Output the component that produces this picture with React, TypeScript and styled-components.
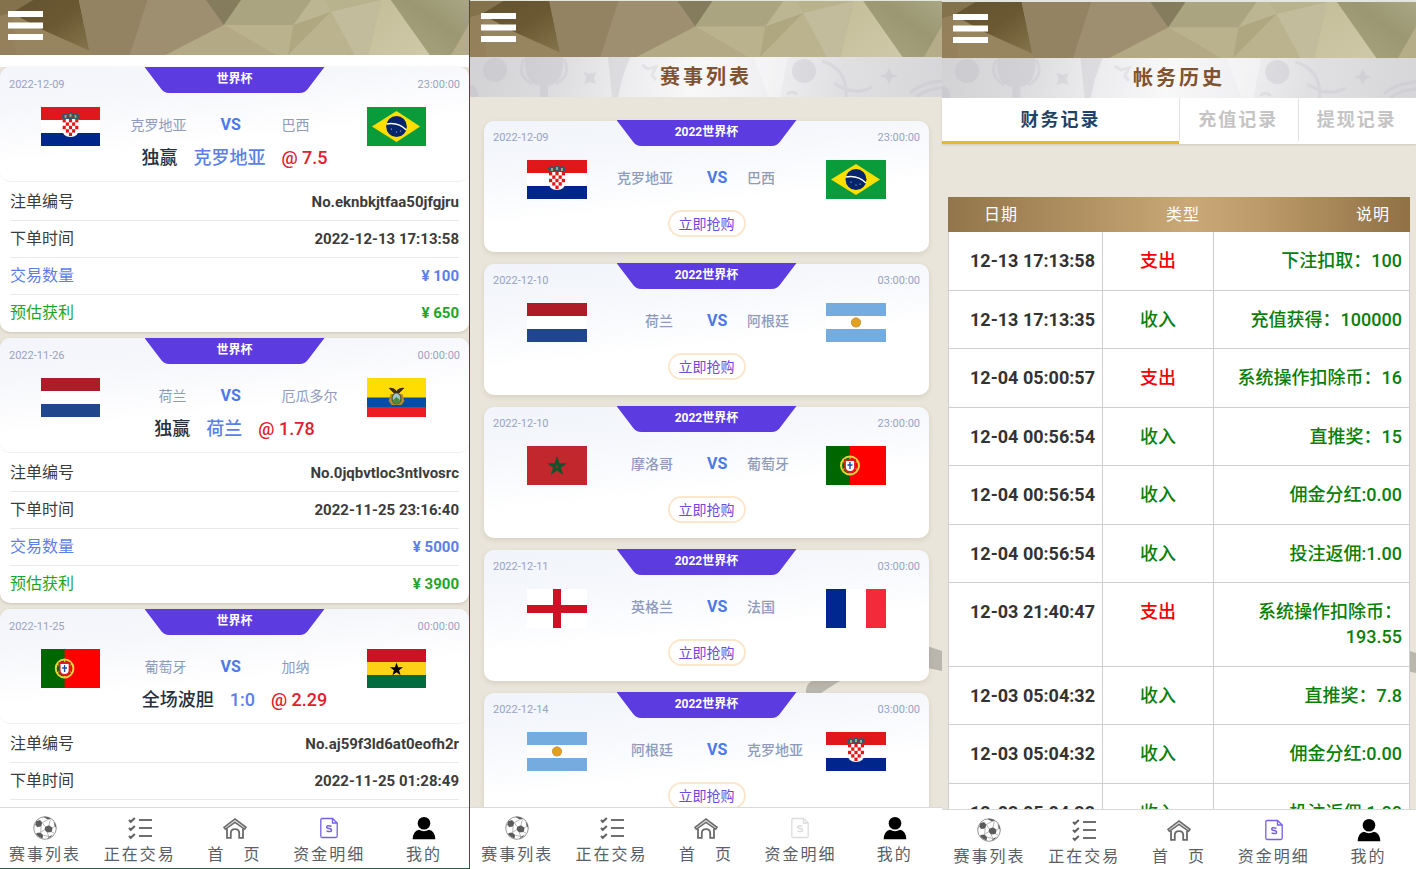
import React from 'react';
import styled, { createGlobalStyle, css } from 'styled-components';

const GlobalStyle = createGlobalStyle`
  *, *::before, *::after { box-sizing: border-box; }
  body {
    margin: 0;
    background: #e9e5da;
    font-family: Roboto, "Noto Sans CJK SC", sans-serif;
    color: #333;
  }
  button { font: inherit; border: 0; padding: 0; background: none; cursor: pointer; }
  a { color: inherit; text-decoration: none; }
  h1, dl, dd, dt, p { margin: 0; }
`;

/* ---------- page frame ---------- */

const Board = styled.main`
  display: grid;
  grid-template-columns: 470fr 472fr 474fr;
  height: 100vh;
  overflow: hidden;
`;

const Phone = styled.section<{ $framed?: boolean; $lead?: number }>`
  display: flex;
  flex-direction: column;
  min-width: 0;
  min-height: 0;
  background: #e9e5da;
  border-top: ${p => p.$lead ?? 0}px solid #e4e5dc;
  ${p => p.$framed && css`
    border-right: 1px solid #2c5a43;
    border-bottom: 1px solid #2c5a43;
  `}
`;

const TopBar = styled.header<{ $compact?: boolean }>`
  position: relative;
  flex: none;
  height: ${p => (p.$compact ? 55 : 56)}px;
  padding: ${p => (p.$compact ? '11px 8px' : '12px 11px')};
`;

const Facets = styled.svg`
  position: absolute;
  inset: 0;
  width: 100%;
  height: 100%;
`;

const MenuButton = styled.button`
  position: relative;
  display: block;
  width: 35px;
  height: 29px;
  svg { display: block; }
`;

const TitleBand = styled.div`
  position: relative;
  flex: none;
  height: 40px;
  display: flex;
  align-items: center;
  justify-content: center;
  overflow: hidden;
  background: linear-gradient(100deg, #d2d2d5 0%, #dcdcdf 18%, #ededef 34%, #f8f8f9 48%, #f0f0f2 62%, #e0e0e3 78%, #d6d6d9 100%);
`;

const Title = styled.h1`
  position: relative;
  font-size: 20px;
  line-height: 24px;
  font-weight: 700;
  letter-spacing: 3px;
  color: #7f5330;
`;

const Scroll = styled.div`
  position: relative;
  flex: 1;
  min-height: 0;
  overflow: hidden;
`;

const Swoosh = styled.svg`
  position: absolute;
  right: 0;
  bottom: 112px;
`;

/* ---------- bottom navigation ---------- */

const NavBar = styled.nav<{ $height: number; $spread?: boolean }>`
  flex: none;
  display: grid;
  grid-template-columns: repeat(5, ${p => (p.$spread ? 'calc(20% + 1px)' : '20%')});
  justify-content: center;
  height: ${p => p.$height}px;
  border-top: 1px solid #d9d9d9;
  background: #fff;
`;

const NavLink = styled.a`
  display: flex;
  flex-direction: column;
  align-items: center;
  padding-top: 8px;
  font-size: 16px;
  line-height: 24px;
  letter-spacing: 2px;
  white-space: nowrap;
  color: #5a5f66;
  svg { display: block; margin-bottom: 3px; }
`;

/* ---------- match head shared by both lists ---------- */

const MatchTop = styled.div`
  display: grid;
  grid-template-columns: 1fr 180px 1fr;
  height: 26px;
  padding: 0 9px;
`;

const Stamp = styled.time<{ $end?: boolean }>`
  padding-top: 10px;
  font-size: 11px;
  line-height: 16px;
  color: #98a3c0;
  text-align: ${p => (p.$end ? 'right' : 'left')};
`;

const Badge = styled.span`
  height: 26px;
  background: #5c3ce0;
  clip-path: path('M0 0H180L164 21Q161 26 155 26H25Q19 26 16 21Z');
  color: #fff;
  font-size: 12px;
  line-height: 24px;
  font-weight: 700;
  text-align: center;
`;

const Teams = styled.div<{ $wide?: boolean }>`
  display: grid;
  grid-template-columns: ${p => (p.$wide ? '59px 87fr 95px 86fr 59px' : '60px 86fr 74px 79fr 60px')};
  align-items: center;
  padding: ${p => (p.$wide ? '0 43px 0 41px' : '0 43px')};
  margin-top: 14px;
`;

const Team = styled.span<{ $home?: boolean; $strong?: boolean }>`
  padding-bottom: 3px;
  font-size: 14px;
  line-height: 20px;
  font-weight: ${p => (p.$strong ? 500 : 400)};
  color: #8f9bbd;
  text-align: ${p => (p.$home ? 'right' : 'left')};
  white-space: nowrap;
`;

const Versus = styled.span`
  padding: 0 0 3px 34px;
  font-size: 16px;
  line-height: 20px;
  font-weight: 700;
  color: #4b79ea;
`;

const FlagSvg = styled.svg`
  display: block;
  width: 100%;
  height: 39px;
`;

/* ---------- bet slips ---------- */

const SlipList = styled.div`
  display: flex;
  flex-direction: column;
  gap: 6px;
  border-top: 12px solid #fff;
`;

const Slip = styled.article`
  height: 265px;
  flex: none;
  border-radius: 10px;
  background: #fff;
  box-shadow: 0 1px 3px rgba(120, 105, 70, 0.25);
`;

const SlipHead = styled.div`
  height: 115px;
  border-radius: 10px;
  border-bottom: 1px solid #f1f1f4;
  background: linear-gradient(174deg, #f3f5fa 0%, #f6f7fb 25%, #fff 60%);
`;

const BetLine = styled.p`
  display: flex;
  justify-content: center;
  gap: 16px;
  font-size: 18px;
  line-height: 24px;
  font-weight: 500;
  color: #26313d;
`;

const Pick = styled.span`color: #5b7fea;`;
const Odds = styled.span`color: #e0202c;`;

const Facts = styled.dl`
  padding: 2px 10px 0;
`;

const Fact = styled.div<{ $tone?: string; $last?: boolean }>`
  display: flex;
  justify-content: space-between;
  height: 37px;
  padding-top: 6px;
  line-height: 24px;
  font-size: 16px;
  color: ${p => p.$tone ?? '#3c3c3c'};
  border-bottom: ${p => (p.$last ? '0' : '1px solid #e9e9ec')};
  dd { font-size: 15px; font-weight: 700; }
`;

/* ---------- match list ---------- */

const MatchList = styled.div`
  position: relative;
  display: flex;
  flex-direction: column;
  gap: 12px;
  padding: 24px 13px 0 14px;
`;

const MatchCard = styled.article`
  flex: none;
  height: 131px;
  border-radius: 10px;
  background: linear-gradient(174deg, #f1f4fa 0%, #f6f8fc 30%, #fff 60%);
  box-shadow: 0 2px 5px rgba(120, 105, 70, 0.16);
  ${MatchTop} { margin-top: -1px; }
`;

const BuyButton = styled.button`
  display: block;
  width: 78px;
  height: 27px;
  margin: 11px auto 0;
  border: 2px solid #fbe7cd;
  border-radius: 14px;
  background: #fff;
  color: #7048dc;
  font-size: 14px;
  line-height: 24px;
`;

/* ---------- ledger ---------- */

const Tabs = styled.div`
  flex: none;
  display: grid;
  grid-template-columns: 2fr 1fr 1fr;
  height: 46px;
  background: #fff;
  box-shadow: 0 1px 2px rgba(0, 0, 0, 0.12);
`;

const Tab = styled.button<{ $active?: boolean }>`
  height: 46px;
  font-size: 18px;
  line-height: 24px;
  font-weight: 700;
  letter-spacing: 2px;
  color: ${p => (p.$active ? '#1d4468' : '#c4c4c4')};
  border-bottom: 3px solid ${p => (p.$active ? '#f0b333' : 'transparent')};
  & + & { box-shadow: inset 1px 0 #e2e2e2; }
`;

const Ledger = styled.table`
  position: relative;
  width: calc(100% - 12px);
  margin: 53px 6px 0;
  border-collapse: separate;
  border-spacing: 0;
  table-layout: fixed;
  font-size: 18px;
  line-height: 25px;

  thead tr {
    background: linear-gradient(90deg, #92754a 0%, #a98a5c 22%, #caa877 52%, #bd9a69 68%, #8f7145 100%);
  }
  th {
    height: 35px;
    padding: 0 20px 0 0;
    color: #fff;
    font-size: 16px;
    line-height: 24px;
    font-weight: 400;
    letter-spacing: 1px;
    text-align: left;
  }
  th:nth-child(1) { width: 155px; padding-left: 36px; }
  th:nth-child(2) { width: 111px; padding: 0 0 0 63px; }
  th:nth-child(3) { text-align: right; }
`;

const Cell = styled.td<{ $tone?: string; $align?: string }>`
  padding: 16px 7px;
  vertical-align: top;
  background: #fff;
  border-right: 1px solid #cfcfcf;
  border-bottom: 1px solid #cfcfcf;
  color: ${p => p.$tone ?? '#333'};
  text-align: ${p => p.$align ?? 'right'};
  font-weight: 500;
  &:first-child { border-left: 1px solid #cfcfcf; font-weight: 700; white-space: nowrap; }
  tr:nth-child(odd) > & { padding-bottom: 17px; }
`;

/* ---------- drawings ---------- */

const Backdrop = () => (
  <Facets viewBox="0 0 1416 165" preserveAspectRatio="none" aria-hidden="true">
    <defs>
      <linearGradient id="base" x1="0" x2="1" y1="0" y2="0">
        <stop offset="0" stopColor="#8f7d56" />
        <stop offset="0.35" stopColor="#a39571" />
        <stop offset="0.7" stopColor="#bdb58f" />
        <stop offset="1" stopColor="#a5a07c" />
      </linearGradient>
      <linearGradient id="dark" x1="0" x2="1" y1="0" y2="1">
        <stop offset="0" stopColor="#645331" />
        <stop offset="0.5" stopColor="#6a5832" />
        <stop offset="1" stopColor="#85744c" />
      </linearGradient>
      <linearGradient id="pale" x1="0" x2="1" y1="0" y2="1">
        <stop offset="0" stopColor="#c3bd98" />
        <stop offset="1" stopColor="#d0c9a9" />
      </linearGradient>
      <linearGradient id="olive" x1="0" x2="1" y1="1" y2="0">
        <stop offset="0" stopColor="#aaa680" />
        <stop offset="0.6" stopColor="#9b9772" />
        <stop offset="1" stopColor="#a9a684" />
      </linearGradient>
    </defs>
    <rect width="1416" height="165" fill="url(#base)" />
    <polygon points="0,0 100,0 35,38 0,48" fill="#83724c" />
    <polygon points="0,48 35,38 50,165 0,165" fill="#94805a" />
    <polygon points="35,38 130,90 270,152 280,165 50,165" fill="#978560" />
    <polygon points="100,0 238,0 270,152 130,90 35,38" fill="url(#dark)" />
    <polygon points="238,0 446,0 392,165 280,165 270,152" fill="#938363" />
    <polygon points="446,0 622,0 676,75 500,165 392,165" fill="#9d8f70" />
    <polygon points="622,0 728,0 676,75" fill="#857c5d" />
    <polygon points="728,0 940,0 886,75 676,75" fill="#aaa480" />
    <polygon points="676,75 834,165 500,165" fill="#b3a985" />
    <polygon points="676,75 886,75 870,165 834,165" fill="#bab28d" />
    <polygon points="940,0 980,0 1000,35 886,75" fill="#bdb692" />
    <polygon points="980,0 1180,0 1000,35" fill="#b8b28d" />
    <polygon points="886,75 1000,35 870,165" fill="#aea780" />
    <polygon points="1000,35 1070,165 870,165" fill="#bbb38e" />
    <polygon points="1000,35 1150,0 1112,165 1070,165" fill="#c3bc9c" />
    <polygon points="1150,0 1180,0 1298,165 1112,165" fill="url(#pale)" />
    <polygon points="1180,0 1416,0 1416,80 1362,165 1298,165" fill="url(#olive)" />
    <polygon points="1416,72 1416,165 1362,165" fill="#b4ad88" />
  </Facets>
);

const BandPattern = () => (
  <Facets viewBox="0 0 472 40" preserveAspectRatio="none" aria-hidden="true">
    <g fill="#b8b8be" fillOpacity="0.28">
      <circle cx="25" cy="13" r="12" />
      <path d="M55 0H93V10Q91 27 78 29V40H70V29Q57 27 55 10Z" />
      <path d="M114 15l6 2 6-2-2 6 2 6-6-2-6 2 2-6z" />
      <circle cx="334" cy="14" r="12" />
      <path d="M419 11l3 6 6 2-6 2-3 6-3-6-6-2 6-2z" />
      <path d="M0 28q8 0 8 12H0z" />
      <path d="M138 0h22l-8 22-4 18h-6z" />
    </g>
    <g fill="none" stroke="#b8b8be" strokeOpacity="0.22" strokeWidth="3">
      <path d="M54 2Q46 18 62 27M94 2Q102 18 86 27" />
      <path d="M317 38a6 6 0 0 1 10 0M440 36Q450 26 472 24M446 40Q456 32 472 31" />
      <path d="M172 8l6 4 8-2-4 8 4 5M352 4q26 8 24 36M364 26q20 14 38 4" />
    </g>
    <path d="M284 0L298 40H310L318 0Z" fill="#fff" fillOpacity="0.3" />
  </Facets>
);

const BackSwoosh = () => (
  <Swoosh width="136" height="50" viewBox="0 0 136 50" aria-hidden="true">
    <path d="M0 50V45Q1 36 12 34L64 14L112 -2L136 6V26L122 23Q70 20 32 37L12 50Z" fill="#b9b6ae" />
  </Swoosh>
);

type Country = 'hr' | 'br' | 'nl' | 'ar' | 'ma' | 'pt' | 'en' | 'fr' | 'ec' | 'gh';

const star = (cx: number, cy: number, r: number) =>
  Array.from({ length: 10 }, (_, i) => {
    const a = (Math.PI / 5) * i - Math.PI / 2;
    const q = i % 2 ? r * 0.39 : r;
    return `${(cx + q * Math.cos(a)).toFixed(2)},${(cy + q * Math.sin(a)).toFixed(2)}`;
  }).join(' ');

const Bands = ({ colors }: { colors: string[] }) => (
  <>{colors.map((c, i) => <rect key={i} y={i * 13} width="60" height="13" fill={c} />)}</>
);

const flagArt: Record<Country, React.ReactNode> = {
  hr: (
    <>
      <Bands colors={['#e0181c', '#fff', '#00268c']} />
      <path d="M22 12h16v11q0 7-8 7t-8-7z" fill="#fff" />
      {[0, 1, 2, 3, 4].map(r => [0, 1, 2, 3, 4].map(c => (r + c) % 2 === 0 && !(r === 4 && (c === 0 || c === 4)) && (
        <rect key={`${r}${c}`} x={22 + c * 3.2} y={12 + r * 3.4} width="3.2" height="3.4" fill="#e0181c" />
      )))}
      <path d="M21 8l3-2 3 1 3-2 3 2 3-1 3 2-1 4H22z" fill="#33576e" />
      <path d="M24 8h2v3h-2zM29 7h2v3h-2zM34 8h2v3h-2z" fill="#8fae7a" />
      <path d="M26 9h2v2h-2zM32 9h2v2h-2z" fill="#a32b3a" />
    </>
  ),
  br: (
    <>
      <rect width="60" height="39" fill="#0a9b3a" />
      <path d="M5 19.500L30 4L54 19.500L30 35Z" fill="#fedf00" />
      <circle cx="30" cy="19.500" r="10.500" fill="#04246e" />
      <path d="M20 17Q32 15 40 23" fill="none" stroke="#fff" strokeWidth="1.500" />
      <g fill="#d7e0ef"><circle cx="25" cy="22" r=".6" /><circle cx="30" cy="25" r=".6" /><circle cx="34" cy="24" r=".6" /></g>
    </>
  ),
  nl: <Bands colors={['#ae1c28', '#fff', '#21468b']} />,
  ar: (
    <>
      <Bands colors={['#74acdf', '#fff', '#74acdf']} />
      <polygon points={star(30, 19.5, 6)} fill="#e8c27a" />
      <circle cx="30" cy="19.500" r="4.600" fill="#e3a01f" stroke="#c08a3c" strokeWidth=".8" />
    </>
  ),
  ma: (
    <>
      <rect width="60" height="39" fill="#c1272d" />
      <polygon points={star(30, 20.5, 10.5)} fill="#12532b" />
      <circle cx="30" cy="20.500" r="1.500" fill="#8d2c2b" />
    </>
  ),
  pt: (
    <>
      <rect width="60" height="39" fill="#f00" />
      <rect width="24" height="39" fill="#060" />
      <circle cx="24" cy="19.500" r="9" fill="none" stroke="#e8d73a" strokeWidth="2" />
      <path d="M16 15l16 9M16 24l16-9M24 10v19" stroke="#e8d73a" strokeWidth="1" />
      <path d="M19 14h10v7q0 5-5 5t-5-5z" fill="#fff" stroke="#d81e1e" strokeWidth="1.800" />
      <path d="M24 16v7M21.500 19h5" stroke="#234a9c" strokeWidth="1.400" />
    </>
  ),
  en: (
    <>
      <rect width="60" height="39" fill="#fff" />
      <path d="M26 0h8v39h-8zM0 16h60v8H0z" fill="#ce1124" />
    </>
  ),
  fr: (
    <>
      <rect width="60" height="39" fill="#fff" />
      <rect width="20" height="39" fill="#00268f" />
      <rect x="40" width="20" height="39" fill="#f32a3a" />
    </>
  ),
  ec: (
    <>
      <rect width="60" height="39" fill="#ffdd00" />
      <rect y="19.500" width="60" height="10" fill="#034ea2" />
      <rect y="29" width="60" height="10" fill="#ed1c24" />
      <path d="M22 10q5-1 8 3q3-4 8-3l-5 5h-6z" fill="#3b2a17" />
      <path d="M24 16l-2 7 3 4h10l3-4-2-7z" fill="#b58a2c" />
      <ellipse cx="30" cy="20.500" rx="4.500" ry="5.500" fill="#9fc7c8" stroke="#4b5b2a" strokeWidth="1.200" />
      <path d="M26.500 22l3.500-3 3.500 3q-1 4-3.500 4t-3.500-4z" fill="#4f8a3c" />
    </>
  ),
  gh: (
    <>
      <Bands colors={['#ce1126', '#fcd116', '#006b3f']} />
      <polygon points={star(30, 20.5, 7)} fill="#000" />
    </>
  ),
};

const Flag = ({ code, label }: { code: Country; label: string }) => (
  <FlagSvg viewBox="0 0 60 39" preserveAspectRatio="none" role="img" aria-label={label}>{flagArt[code]}</FlagSvg>
);

const BallIcon = () => (
  <svg width="24" height="24" viewBox="0 0 24 24" aria-hidden="true">
    <circle cx="12" cy="12" r="11.300" fill="#fff" stroke="#8a8a8a" strokeWidth=".9" />
    <g fill="#5c5c5c">
      <path d="M12.200 10.800L16 9.200l3.600 2.600-.9 4.200-4.600.6-2.600-2.800z" />
      <path d="M3.200 5.200L7 4l2.300 2.600-1.100 4L4 11 2.300 8.200z" />
      <path d="M3.600 17l4-.6 2.600 2.800-.8 3.400Q5.600 21.300 3.200 18.600z" />
      <path d="M10.500 .9q4.500-.4 7.500 2.100l-3 .4z" />
      <path d="M20.600 5.500q2.600 3 2.600 6.500l-1.800-2.600z" />
      <path d="M16 20.500l4-1.700q-2.200 2.900-5.500 3.900z" />
    </g>
    <path d="M9.300 6.600l2.900 4.200M9.300 6.600L15 3.400M16 9.200l1.400-5.800M8.200 10.600l-.6 5.800M11.500 13.800l-3.900 2.600M14.100 16.600L16 20.500M10.200 19.200l5.800 1.300M19.600 11.800l2.400-1.400M18.700 16l2.800 1.200M2.300 8.200l-1 2.500" fill="none" stroke="#a5a5a5" strokeWidth=".8" />
  </svg>
);

const ListIcon = () => (
  <svg width="24" height="24" viewBox="0 0 24 24" fill="none" stroke="#5f5f5f" aria-hidden="true">
    <path d="M1 4l1.800 1.800L6.800 2M1 12l1.800 1.800L6.800 10M1 20l1.800 1.800L6.800 18" strokeWidth="2" />
    <path d="M11 4h13M11 12h13M11 20h13" strokeWidth="2" stroke="#6e6e6e" />
  </svg>
);

const HomeIcon = () => (
  <svg width="24" height="24" viewBox="0 0 24 24" fill="none" stroke="#6a6a6a" strokeWidth="1.600" aria-hidden="true">
    <path d="M1 11.300L12 3l11 8.300-1.300 2L12 6.300l-9.700 7z" fill="#d9d9d9" strokeWidth="1.500" />
    <path d="M4 12.600v9.200h3.800v-4.600q0-4 4.200-4t4.200 4v4.600H20v-9.200" strokeWidth="1.800" />
  </svg>
);

const BillIcon = ({ color }: { color: string }) => (
  <svg width="24" height="24" viewBox="0 0 24 24" fill="none" stroke={color} strokeWidth="1.300" aria-hidden="true">
    <path d="M5 2.500h10.500l4.700 4.500v13q0 1.500-1.500 1.500H5q-1.200 0-1.200-1.500V4q0-1.500 1.200-1.500z" />
    <path d="M15.500 2.500V7h4.700" />
    <path d="M14.500 10.300q-4.800-1.600-4.800.7 0 1.200 2.400 1.500t2.400 1.700q0 2.300-4.900.8" strokeWidth="1.500" />
  </svg>
);

const UserIcon = () => (
  <svg width="24" height="24" viewBox="0 0 24 24" aria-hidden="true">
    <circle cx="12" cy="7.200" r="6.300" />
    <path d="M.7 23.300q.3-8.300 6.300-9.500 5 2.700 10 0 6 1.200 6.300 9.500z" />
  </svg>
);

const Menu = () => (
  <MenuButton type="button" aria-label="菜单">
    <svg width="35" height="29" viewBox="0 0 35 29" fill="#fff" aria-hidden="true">
      <path d="M0 0h35v6H0zM0 11.500h35v6H0zM0 23h35v6H0z" />
    </svg>
  </MenuButton>
);

const BottomNav = ({ height, bill = '#7462e0', spread }: { height: number; bill?: string; spread?: boolean }) => (
  <NavBar $height={height} $spread={spread}>
    <NavLink href="#matches"><BallIcon />赛事列表</NavLink>
    <NavLink href="#trading"><ListIcon />正在交易</NavLink>
    <NavLink href="#home"><HomeIcon />首　页</NavLink>
    <NavLink href="#funds"><BillIcon color={bill} />资金明细</NavLink>
    <NavLink href="#me"><UserIcon />我的</NavLink>
  </NavBar>
);

/* ---------- data ---------- */

interface Side { code: Country; name: string }

const T: Record<Country, Side> = {
  hr: { code: 'hr', name: '克罗地亚' },
  br: { code: 'br', name: '巴西' },
  nl: { code: 'nl', name: '荷兰' },
  ar: { code: 'ar', name: '阿根廷' },
  ma: { code: 'ma', name: '摩洛哥' },
  pt: { code: 'pt', name: '葡萄牙' },
  en: { code: 'en', name: '英格兰' },
  fr: { code: 'fr', name: '法国' },
  ec: { code: 'ec', name: '厄瓜多尔' },
  gh: { code: 'gh', name: '加纳' },
};

const slips = [
  { date: '2022-12-09', time: '23:00:00', home: T.hr, away: T.br, kind: '独赢', pick: '克罗地亚', odds: '7.5', no: 'No.eknbkjtfaa50jfgjru', at: '2022-12-13 17:13:58', stake: '100', win: '650' },
  { date: '2022-11-26', time: '00:00:00', home: T.nl, away: T.ec, kind: '独赢', pick: '荷兰', odds: '1.78', no: 'No.0jqbvtloc3ntlvosrc', at: '2022-11-25 23:16:40', stake: '5000', win: '3900' },
  { date: '2022-11-25', time: '00:00:00', home: T.pt, away: T.gh, kind: '全场波胆', pick: '1:0', odds: '2.29', no: 'No.aj59f3ld6at0eofh2r', at: '2022-11-25 01:28:49' },
];

const matches = [
  { date: '2022-12-09', time: '23:00:00', home: T.hr, away: T.br },
  { date: '2022-12-10', time: '03:00:00', home: T.nl, away: T.ar },
  { date: '2022-12-10', time: '23:00:00', home: T.ma, away: T.pt },
  { date: '2022-12-11', time: '03:00:00', home: T.en, away: T.fr },
  { date: '2022-12-14', time: '03:00:00', home: T.ar, away: T.hr },
];

const ledger: [string, '支出' | '收入', string][] = [
  ['12-13 17:13:58', '支出', '下注扣取：100'],
  ['12-13 17:13:35', '收入', '充值获得：100000'],
  ['12-04 05:00:57', '支出', '系统操作扣除币：16'],
  ['12-04 00:56:54', '收入', '直推奖：15'],
  ['12-04 00:56:54', '收入', '佣金分红:0.00'],
  ['12-04 00:56:54', '收入', '投注返佣:1.00'],
  ['12-03 21:40:47', '支出', '系统操作扣除币：193.55'],
  ['12-03 05:04:32', '收入', '直推奖：7.8'],
  ['12-03 05:04:32', '收入', '佣金分红:0.00'],
  ['12-03 05:04:32', '收入', '投注返佣:1.00'],
];

interface HeadProps { date: string; time: string; home: Side; away: Side; badge: string; wide?: boolean }

const MatchHead = ({ date, time, home, away, badge, wide }: HeadProps) => (
  <>
    <MatchTop>
      <Stamp>{date}</Stamp>
      <Badge>{badge}</Badge>
      <Stamp $end>{time}</Stamp>
    </MatchTop>
    <Teams $wide={wide}>
      <Flag code={home.code} label={home.name} />
      <Team $home $strong={!wide}>{home.name}</Team>
      <Versus>VS</Versus>
      <Team $strong={!wide}>{away.name}</Team>
      <Flag code={away.code} label={away.name} />
    </Teams>
  </>
);

export default function App() {
  return (
    <>
      <GlobalStyle />
      <Board>
        <Phone $framed>
          <TopBar $compact><Backdrop /><Menu /></TopBar>
          <Scroll>
            <SlipList>
              {slips.map(s => (
                <Slip key={s.no}>
                  <SlipHead>
                    <MatchHead date={s.date} time={s.time} home={s.home} away={s.away} badge="世界杯" wide />
                    <BetLine><span>{s.kind}</span><Pick>{s.pick}</Pick><Odds>@ {s.odds}</Odds></BetLine>
                  </SlipHead>
                  <Facts>
                    <Fact><dt>注单编号</dt><dd>{s.no}</dd></Fact>
                    <Fact><dt>下单时间</dt><dd>{s.at}</dd></Fact>
                    {s.stake && <Fact $tone="#5b7fea"><dt>交易数量</dt><dd>¥ {s.stake}</dd></Fact>}
                    {s.win && <Fact $tone="#1ea526" $last><dt>预估获利</dt><dd>¥ {s.win}</dd></Fact>}
                  </Facts>
                </Slip>
              ))}
            </SlipList>
          </Scroll>
          <BottomNav height={61} spread />
        </Phone>

        <Phone $lead={1}>
          <TopBar><Backdrop /><Menu /></TopBar>
          <TitleBand><BandPattern /><Title>赛事列表</Title></TitleBand>
          <Scroll>
            <BackSwoosh />
            <MatchList>
              {matches.map(m => (
                <MatchCard key={m.date + m.time}>
                  <MatchHead {...m} badge="2022世界杯" />
                  <BuyButton type="button">立即抢购</BuyButton>
                </MatchCard>
              ))}
            </MatchList>
          </Scroll>
          <BottomNav height={62} bill="#dcdcdc" />
        </Phone>

        <Phone $lead={2}>
          <TopBar><Backdrop /><Menu /></TopBar>
          <TitleBand><BandPattern /><Title>帐务历史</Title></TitleBand>
          <Tabs role="tablist">
            <Tab type="button" role="tab" aria-selected="true" $active>财务记录</Tab>
            <Tab type="button" role="tab" aria-selected="false">充值记录</Tab>
            <Tab type="button" role="tab" aria-selected="false">提现记录</Tab>
          </Tabs>
          <Scroll>
            <BackSwoosh />
            <Ledger>
              <thead>
                <tr><th scope="col">日期</th><th scope="col">类型</th><th scope="col">说明</th></tr>
              </thead>
              <tbody>
                {ledger.map(([when, kind, note], i) => (
                  <tr key={i}>
                    <Cell>{when}</Cell>
                    <Cell $align="center" $tone={kind === '支出' ? '#f40000' : '#0a800a'}>{kind}</Cell>
                    <Cell $tone="#0a800a">{note}</Cell>
                  </tr>
                ))}
              </tbody>
            </Ledger>
          </Scroll>
          <BottomNav height={60} />
        </Phone>
      </Board>
    </>
  );
}
